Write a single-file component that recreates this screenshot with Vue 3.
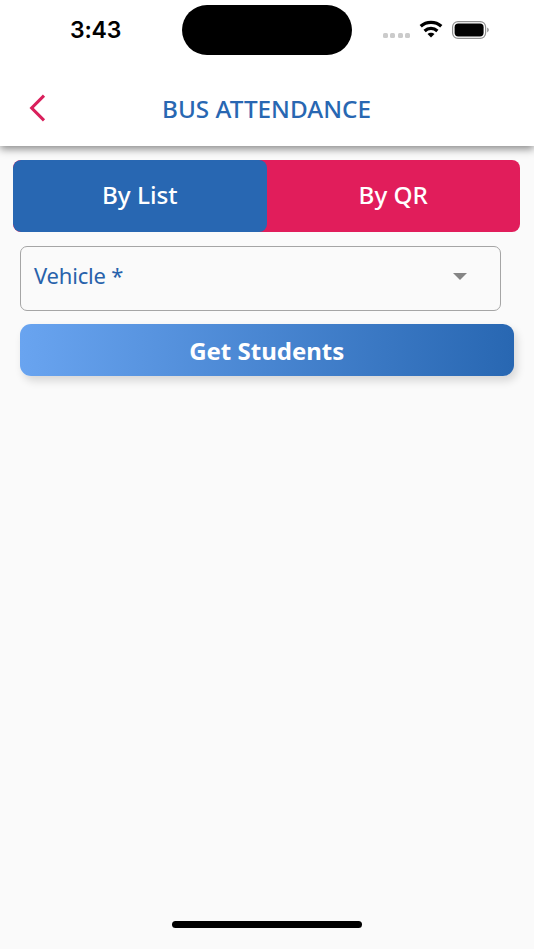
<script setup>
import { ref } from 'vue'

const tabs = ['By List', 'By QR']
const active = ref(0)
</script>

<template>
  <div class="screen">
    <header class="top">
      <div class="status">
        <span class="time">3:43</span>
        <div class="island"></div>
        <div class="signal"><i v-for="n in 4" :key="n"></i></div>
        <svg class="wifi" width="24" height="18" viewBox="0 0 24 18">
          <g fill="none" stroke="#000" stroke-width="3.3">
            <path d="M1.7 6.3C7.5 1.1 16.5 1.1 22.3 6.3" />
            <path d="M5.6 10.9C9.3 7.6 14.7 7.6 18.4 10.9" />
          </g>
          <path d="M12 17.6 8.5 14.1C10.4 12.4 13.6 12.4 15.5 14.1Z" fill="#000" />
        </svg>
        <svg class="battery" width="38" height="18" viewBox="0 0 38 18">
          <rect x=".6" y=".6" width="33" height="16.8" rx="5.4" fill="none" stroke="#8f8f8f" stroke-width="1.2" />
          <rect x="2.6" y="2.6" width="29" height="12.8" rx="3.6" fill="#000" />
          <path d="M35.2 6.6C37.3 7.6 37.3 10.4 35.2 11.4Z" fill="#8f8f8f" />
        </svg>
      </div>
      <div class="nav">
        <svg class="back" width="17" height="28" viewBox="0 0 17 28">
          <path d="M15 1.7 2.7 14 15 26.3" fill="none" stroke="#d9205c" stroke-width="3.1" />
        </svg>
        <h1>BUS ATTENDANCE</h1>
      </div>
    </header>
    <main>
      <div class="tabs">
        <button v-for="(t, i) in tabs" :key="t" :class="{ on: i === active }" @click="active = i">
          <span>{{ t }}</span>
        </button>
      </div>
      <div class="select">
        <span>Vehicle *</span>
        <svg width="14" height="7" viewBox="0 0 14 7"><path d="M0 0H14L7 7Z" fill="#858585" /></svg>
      </div>
      <button class="submit"><span>Get Students</span></button>
    </main>
    <footer><div class="home"></div></footer>
  </div>
</template>

<style>
body {
  background: #fafafa;
}
</style>

<style scoped>
.screen {
  box-sizing: border-box;
  width: 534px;
  height: 950px;
  display: flex;
  flex-direction: column;
  overflow: hidden;
  border-bottom: 1px solid #fff;
  background: #fafafa;
  font-family: "Noto Sans", "Open Sans", sans-serif;
}
.top {
  height: 146px;
  flex: none;
  background: #fff;
  box-shadow: 0 3px 8px rgba(0, 0, 0, 0.45);
}
.status {
  display: flex;
  align-items: flex-start;
  height: 70px;
}
.time {
  width: 111.5px;
  margin: 15px 0 0 70px;
  font: 600 23px/30px Inter, sans-serif;
  letter-spacing: -0.2px;
  white-space: nowrap;
}
.island {
  width: 170.5px;
  height: 50px;
  margin-top: 5px;
  border-radius: 25px;
  background: #000;
}
.signal {
  display: flex;
  gap: 2.3px;
  margin: 33px 0 0 31px;
}
.signal i {
  width: 5px;
  height: 5px;
  border-radius: 1.6px;
  background: #cbcbcb;
}
.wifi {
  margin: 20px 0 0 9.5px;
}
.battery {
  margin: 20.5px 0 0 9px;
}
.nav {
  display: grid;
  grid-template-columns: 60px 1fr 61px;
  align-items: center;
  height: 76px;
}
.back {
  margin-left: 29px;
}
h1 {
  margin: 2px 0 0;
  text-align: center;
  color: #2867b2;
  font-size: 24.3px;
  font-weight: 500;
  line-height: 32px;
  white-space: nowrap;
}
main {
  flex: 1;
  padding: 14px 14px 0 13px;
}
button {
  border: 0;
  padding: 0;
  color: #fff;
  font-family: inherit;
}
.tabs {
  display: flex;
  height: 71.5px;
  border-radius: 8px;
  overflow: hidden;
  background: #e11d5b;
}
.tabs button {
  flex: 1;
  padding-bottom: 2px;
  border-radius: 8px;
  background: transparent;
  font-size: 24.3px;
  font-weight: 500;
}
.tabs .on {
  background: #2867b2;
}
.select {
  box-sizing: border-box;
  display: flex;
  align-items: center;
  justify-content: space-between;
  width: 480.5px;
  height: 65px;
  margin: 14px 0 0 7px;
  padding: 0 33px 3px 13px;
  border: 1.3px solid #a5a5a5;
  border-radius: 7px;
  color: #2862ab;
  font-size: 22px;
  letter-spacing: -0.2px;
}
.select span {
  padding-bottom: 4px;
}
.submit {
  display: block;
  width: 493.5px;
  height: 52px;
  margin: 13.5px 0 0 7px;
  border-radius: 11px;
  background: linear-gradient(90deg, #69a4f0, #2867b2);
  box-shadow: 3px 5px 8px rgba(0, 0, 0, 0.14);
  font-size: 24px;
  font-weight: 700;
}
footer {
  display: flex;
  justify-content: center;
  height: 28px;
}
.home {
  width: 190px;
  height: 6.5px;
  border-radius: 4px;
  background: #000;
}
</style>
